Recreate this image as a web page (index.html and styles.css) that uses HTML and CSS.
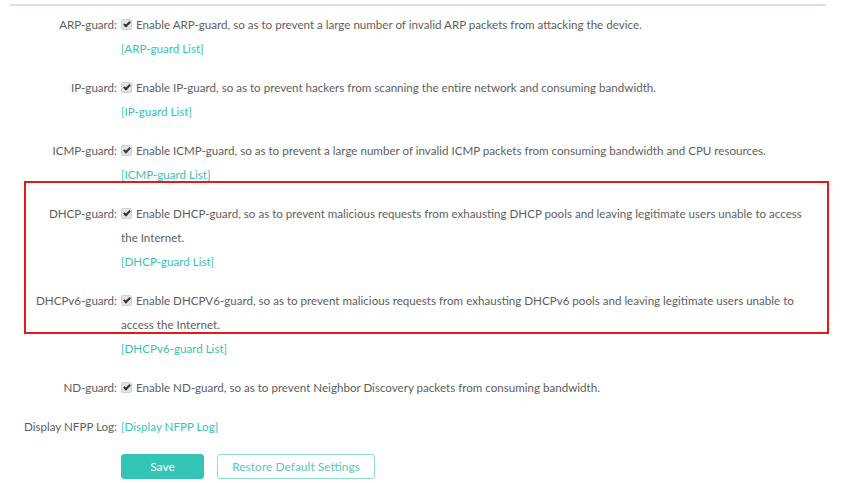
FILE: index.html
```html
<!DOCTYPE html>
<html lang="en">
<head>
    <meta charset="UTF-8">
    <meta name="viewport" content="width=device-width, initial-scale=1.0">
    <title>NFPP</title>
    <link rel="stylesheet" href="styles.css">
</head>
<body>
    <div class="page">
        <div class="divider"></div>
        <form class="nfpp-form">
            <div class="form-group">
                <label class="field-label">ARP-guard:</label>
                <div class="field-body">
                    <div class="check-line"><span class="check"></span>Enable ARP-guard, so as to prevent a large number of invalid ARP packets from attacking the device.</div>
                    <a class="list-link" href="#">[ARP-guard List]</a>
                </div>
            </div>
            <div class="form-group">
                <label class="field-label">IP-guard:</label>
                <div class="field-body">
                    <div class="check-line"><span class="check"></span>Enable IP-guard, so as to prevent hackers from scanning the entire network and consuming bandwidth.</div>
                    <a class="list-link" href="#">[IP-guard List]</a>
                </div>
            </div>
            <div class="form-group">
                <label class="field-label">ICMP-guard:</label>
                <div class="field-body">
                    <div class="check-line"><span class="check"></span>Enable ICMP-guard, so as to prevent a large number of invalid ICMP packets from consuming bandwidth and CPU resources.</div>
                    <a class="list-link" href="#">[ICMP-guard List]</a>
                </div>
            </div>
            <div class="form-group">
                <label class="field-label">DHCP-guard:</label>
                <div class="field-body">
                    <div class="check-line"><span class="check"></span>Enable DHCP-guard, so as to prevent malicious requests from exhausting DHCP pools and leaving legitimate users unable to access the Internet.</div>
                    <a class="list-link" href="#">[DHCP-guard List]</a>
                </div>
            </div>
            <div class="form-group">
                <label class="field-label">DHCPv6-guard:</label>
                <div class="field-body">
                    <div class="check-line"><span class="check"></span>Enable DHCPV6-guard, so as to prevent malicious requests from exhausting DHCPv6 pools and leaving legitimate users unable to access the Internet.</div>
                    <a class="list-link" href="#">[DHCPv6-guard List]</a>
                </div>
            </div>
            <div class="form-group">
                <label class="field-label">ND-guard:</label>
                <div class="field-body">
                    <div class="check-line"><span class="check"></span>Enable ND-guard, so as to prevent Neighbor Discovery packets from consuming bandwidth.</div>
                </div>
            </div>
            <div class="form-group">
                <label class="field-label">Display NFPP Log:</label>
                <div class="field-body">
                    <a class="list-link" href="#">[Display NFPP Log]</a>
                </div>
            </div>
            <div class="form-actions">
                <button type="button" class="btn-save">Save</button>
                <button type="button" class="btn-restore">Restore Default Settings</button>
            </div>
        </form>
        <!-- highlight around the DHCP options -->
        <div class="highlight"></div>
    </div>
</body>
</html>
```

FILE: styles.css
```css
body {
    margin: 0;
    background: #fff;
    font-family: "Lato", "Liberation Sans", sans-serif;
    font-size: 11.6px;
    color: #5e5e5e;
}
.page {
    position: relative;
    height: 483px;
    padding-top: 4px;
    box-sizing: border-box;
}
.divider {
    margin-left: 10px;
    width: 816px;
    height: 2px;
    background-color: #d6dee8;
}
.nfpp-form {
    display: flex;
    flex-direction: column;
    gap: 15px;
    padding-top: 7px;
}
.form-group {
    display: grid;
    grid-template-columns: 121px 690px;
    line-height: 24px;
}
.field-label {
    text-align: right;
    padding-right: 4px;
    white-space: nowrap;
}
.field-body {
    display: flex;
    flex-direction: column;
    align-items: flex-start;
}
.check {
    display: inline-block;
    width: 9px;
    height: 9px;
    margin-right: 4px;
    vertical-align: -1px;
    background-color: #e4e4e4;
    border: 1px solid #cfcfcf;
    border-radius: 2px;
    position: relative;
}
.check::after {
    content: "";
    position: absolute;
    left: 3px;
    top: 0px;
    width: 2px;
    height: 5px;
    border: solid #333;
    border-width: 0 2px 2px 0;
    transform: rotate(45deg);
}
.list-link {
    color: #3dbfb0;
    text-decoration: none;
}
.form-actions {
    display: flex;
    gap: 13px;
    padding-left: 121px;
}
.form-actions button {
    height: 25px;
    font-family: inherit;
    font-size: 12px;
    border-radius: 3px;
    cursor: pointer;
}
.btn-save {
    width: 83px;
    background-color: #33c4b5;
    border: 1px solid #33c4b5;
    color: #fff;
}
.btn-restore {
    width: 158px;
    background-color: #fff;
    border: 1px solid #8fdcd2;
    color: #5ec7ba;
}
.highlight {
    position: absolute;
    left: 24px;
    top: 181px;
    width: 805px;
    height: 153px;
    border: 2px solid #e8161d;
    box-sizing: border-box;
}
```
